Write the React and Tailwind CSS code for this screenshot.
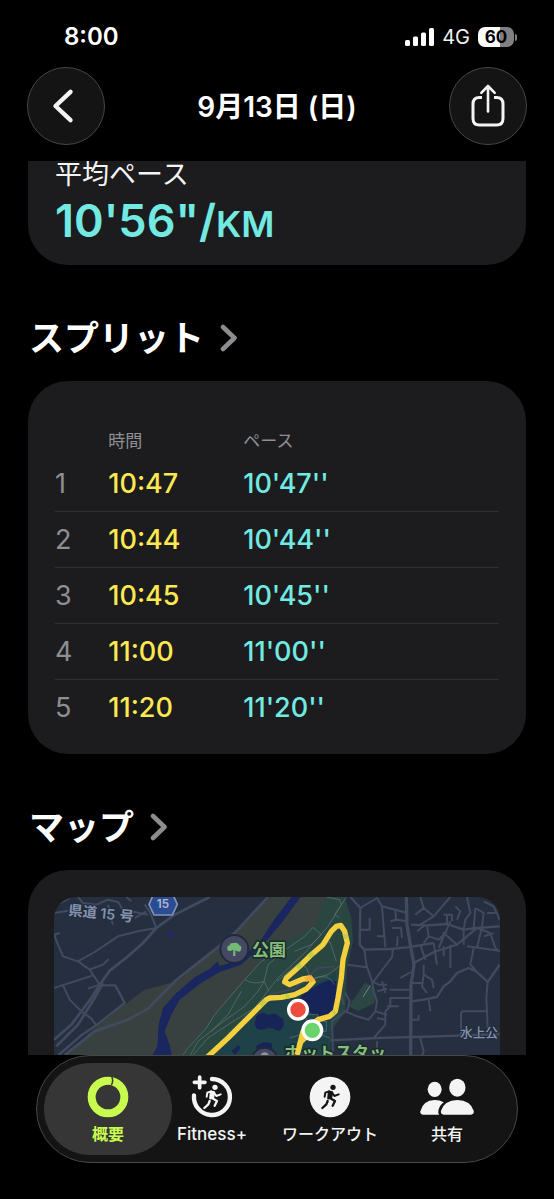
import React from "react";

const FONT = "font-['Inter','Noto_Sans_CJK_JP',sans-serif]";

const SPLITS = [
  { km: 1, time: "10:47", pace: "10'47''" },
  { km: 2, time: "10:44", pace: "10'44''" },
  { km: 3, time: "10:45", pace: "10'45''" },
  { km: 4, time: "11:00", pace: "11'00''" },
  { km: 5, time: "11:20", pace: "11'20''" },
];

function SignalIcon() {
  return (
    <svg className="h-[18px] w-[29px]" viewBox="0 0 29 18" fill="#fff" aria-hidden="true">
      <rect x="0" y="12" width="5" height="6" rx="1.5" />
      <rect x="8" y="8.5" width="5" height="9.5" rx="1.5" />
      <rect x="16" y="4.5" width="5" height="13.5" rx="1.5" />
      <rect x="24" y="0" width="5" height="18" rx="1.5" />
    </svg>
  );
}

function Battery() {
  return (
    <div className="flex items-center gap-px">
      <div className="flex h-5 w-9 items-center justify-center rounded-[7px] bg-linear-to-r from-white from-60% to-[#808080] to-60% text-[17px] leading-5 font-bold text-black">
        60
      </div>
      <div className="h-[7px] w-[2px] rounded-r-full bg-[#808080]" />
    </div>
  );
}

function StatusBar() {
  return (
    <div className="flex h-[67px] items-center justify-between pt-[7px] pr-[37px] pl-16">
      <div className="text-2xl font-semibold text-white">8:00</div>
      <div className="flex items-center gap-2">
        <SignalIcon />
        <div className="text-xl leading-5 text-[#f2f2f2]">4G</div>
        <Battery />
      </div>
    </div>
  );
}

function TopBar() {
  const round =
    "flex size-[78px] items-center justify-center rounded-full border border-[#474747] bg-[#141414]";
  return (
    <div className="flex items-center justify-between px-[27px]">
      <button type="button" aria-label="戻る" className={round}>
        <svg className="size-9" viewBox="0 0 36 36" fill="none" stroke="#f4f4f4" strokeWidth="4.4" strokeLinecap="round" strokeLinejoin="round">
          <path d="M22.5 3.8 7.5 18 22.5 32.2" />
        </svg>
      </button>
      <h1 className="pt-0.5 text-[28px] leading-8 font-semibold text-white">9月13日 (日)</h1>
      <button type="button" aria-label="共有" className={round}>
        <svg className="h-11 w-9" viewBox="0 0 36 44" fill="none" stroke="#f4f4f4" strokeWidth="3" strokeLinecap="round" strokeLinejoin="round">
          <path d="M12 13.5H9.5Q3 13.5 3 20V34.5Q3 41 9.5 41H26.5Q33 41 33 34.5V20Q33 13.5 26.5 13.5H24" strokeLinecap="butt" />
          <path d="M18 27.5V2.5M11.3 8.8 18 2 24.7 8.8" strokeWidth="2.6" />
        </svg>
      </button>
    </div>
  );
}

function SectionHeading({ children }) {
  return (
    <h2 className="mx-[29px] mt-[53px] mb-[23px] text-[35px] leading-10 font-bold text-white">
      <a href="#" className="flex items-center gap-4">
        {children}
        <svg className="h-7 w-[18px]" viewBox="0 0 18 28" fill="none" stroke="#8b8b90" strokeWidth="4.6" strokeLinecap="round" strokeLinejoin="round" aria-hidden="true">
          <path d="M3 3 14.5 14 3 25" />
        </svg>
      </a>
    </h2>
  );
}

function SplitTable() {
  return (
    <div className="mx-7 rounded-[40px] bg-[#1c1c1e] px-[27px] pt-[46px] pb-[19px]">
      <table className="w-full table-fixed border-collapse text-left">
        <colgroup>
          <col className="w-[12%]" />
          <col className="w-[30.4%]" />
          <col />
        </colgroup>
        <thead>
          <tr className="h-7 text-[17px] leading-7 text-[#8e8e93]">
            <td className="p-0" />
            <th scope="col" className="p-0 font-normal">時間</th>
            <th scope="col" className="p-0 font-normal">ペース</th>
          </tr>
        </thead>
        <tbody>
          {SPLITS.map((s) => (
            <tr key={s.km} className="h-14 border-b border-[#303032] text-[27px] leading-8 last:border-b-0">
              <th scope="row" className="p-0 pt-0.5 font-normal text-[#8e8e93]">{s.km}</th>
              <td className="p-0 pt-0.5 font-medium text-[#fde851]">{s.time}</td>
              <td className="p-0 pt-0.5 font-medium text-[#72e9e1]">{s.pace}</td>
            </tr>
          ))}
        </tbody>
      </table>
    </div>
  );
}

function RouteMap() {
  return (
    <svg
      className="block h-[200px] w-full rounded-[22px]"
      viewBox="78 97 1338 600"
      preserveAspectRatio="xMidYMin slice"
      role="img"
      aria-label="ルートマップ"
    >
      <rect x="78" y="97" width="1338" height="600" fill="#252f40" />
      {/* riverbank */}
      <path d="M725 97 L660 168 560 255 450 350 Q370 370 345 378 L290 420 190 500 105 580 V700H700L860 300 895 97Z" fill="#394140" />
      {/* park */}
      <path d="M465 571 L550 460 650 345 700 285 790 220 865 180 880 130 895 97H950L970 160 975 230 957 310 952 440 908 500V700H400Z" fill="#294740" />
      <path d="M560 571 L720 410 790 380 880 350 925 320 925 430 905 500V600H540Z" fill="#1f4148" />
      <path d="M1012 353 L1040 372 1040 415 990 440 962 425Z" fill="#2b4644" />
      {/* water */}
      <path d="M372 575 L388 545 392 480 405 430 445 385 500 338 545 312 568 290 575 303 620 292 690 240 735 170 790 97H818L765 170 712 232 640 300 575 322 515 358 455 405 430 450 410 500 425 540 432 575Z" fill="#19265f" />
      <path d="M818 395 L870 360 900 347 925 350 922 440 890 460 850 445 835 425Z" fill="#172458" />
      <path d="M685 455 q20 -18 35 -4 q30 -12 38 14 q-2 34 -35 24 q-40 18 -43 -14z M735 470 q35 -30 32 12 q-12 30 -32 8z M610 560 l20 -18 8 8 -16 20z M685 545 q20 -20 48 -8 l-5 30 -40 4z" fill="#172458" />
      <path d="M412 205 l20 -6 6 12 -12 6z" fill="#1c2c66" />

      {/* west roads */}
      <g fill="none" stroke="#414b60" strokeWidth="6" strokeLinejoin="round">
        <path strokeWidth="8" d="M720 97 L625 200 560 255 440 350 360 432 300 465 200 500 110 571" />
        <path strokeWidth="8" d="M78 525 L130 480 190 400 215 360 245 318 300 275 345 235 385 190 440 150 545 97" />
        <path strokeWidth="8" d="M85 545 L150 480 200 400 225 355" />
        <path strokeWidth="7" d="M92 571 L160 512 205 482 290 415 262 362 215 362" />
        <path d="M78 145 L120 138M78 210 L90 240 105 275 150 290 185 315 215 360M150 290 L200 262 270 215 330 200 385 190 365 140 350 120" />
        <path d="M78 370 L195 332M185 315 L225 300 242 283M180 372 L215 360M105 362 L125 405 160 440 190 462 205 482M78 210 L95 205 M150 97 L165 115 205 120 240 105 270 112 285 135 360 150M240 120 L250 165 255 180" />
        <path d="M78 125 L125 100M320 160 L355 140M295 97 L310 110" />
      </g>

      {/* park paths */}
      <g fill="none" stroke="#67757b" strokeWidth="2">
        <path d="M465 571 L480 550 535 490 560 450 650 345 700 290 745 262 780 250 830 215 855 188 880 210 850 240 800 260" />
        <path d="M650 345 Q680 362 708 350 L722 378M487 571 L510 530 580 475 650 425 690 380 708 350 720 300 750 275" />
        <path d="M495 571 L540 520 600 480 680 430 720 378 750 340 830 265 900 185 955 97M640 380 L600 450 550 500" />
        <path d="M895 97 L935 105 940 120 920 150 935 160M747 350 L830 280 880 250 905 230 925 290" />
        <path d="M820 295 Q860 330 830 350 T770 350M860 340 L900 330 940 300M850 345 Q900 320 920 360M785 520 L850 500 905 520M830 450 H870V470H895V500H850Z" />
      </g>
      <path d="M1005 397 L1027 362" stroke="#718580" strokeWidth="3" />
      <path d="M560 565 L650 470 730 388 800 372 870 310 920 305" fill="none" stroke="#3c4862" strokeWidth="5" />

      {/* east roads */}
      <g transform="translate(747 0)" fill="none" stroke="#414b60" strokeWidth="6" strokeLinejoin="round">
        <path strokeWidth="10" d="M388 97 L390 180 400 240 411 300 402 360 401 571" />
        <path strokeWidth="7" d="M160 527 L300 520 480 515 668 508" />
        <path strokeWidth="7" d="M220 97 L250 130 248 240 262 255 340 253 392 248 470 235" />
        <path d="M250 130 L300 100 315 125 320 190 325 248M315 125 L355 135 390 145M390 170 L360 165 340 170M355 135 L357 165M278 160 V195H250M300 215 H325M348 253 L345 278 320 310 290 350M360 245 L362 215M345 190 L372 190 375 220" />
        <path d="M262 255 L268 300 285 350 290 380 300 410 295 440 275 465 240 455 205 440 165 470 168 571M212 300 L268 308M285 350 L305 360 330 360M300 380 L330 372M315 350 L325 385M338 400 H400M338 375 H400M340 400 V425L325 440 V480L290 520M295 440 L330 450M370 340 L402 322M330 425 H365M300 460 L325 465" />
        <path strokeWidth="7" d="M411 295 L470 262 540 240 600 190 668 185M402 180 L450 182 510 178 560 195 600 190M404 410 L440 405 480 397 500 365 520 350 540 325 575 310 600 322 632 352 668 300" />
        <path d="M430 97 L440 130 415 150M440 130 L470 155 500 120 520 97M470 155 L430 180M450 182 L455 215 440 235M510 150 V178M500 150 H525V170M540 165 L550 140 535 125M560 195 V240M520 240 V310M485 250 L520 170M470 235 L480 300M445 180 L420 200M500 245 V275M540 240 L500 205 490 240M455 215 L485 225 510 200M430 240 L445 285M570 97 L580 145 565 165 560 195M595 130 L620 145 615 185 600 250M595 130 L590 190M620 110 L650 125 668 165M630 145 H655M640 205 L655 250 668 262M600 190 L640 205M590 250 L580 300 600 322M570 245 L668 258M620 215 L650 205" />
        <path d="M440 300 V330L465 345 470 370M404 355 H440M440 330 L435 365 450 385M455 405 L460 440M402 465 H425V450M632 352 L628 400 630 440 632 490M630 440 H560Q552 440 552 450V510M430 520 L440 560 436 571M300 530 L300 571M205 385 L218 410 210 440M190 380 L200 420" />
      </g>

      {/* recorded route */}
      <path
        d="M535 580 L600 520 715 405 725 400 760 398 800 390 835 373 855 352 845 340 825 343 785 360 770 352 775 340 820 300 850 270 885 240 910 200 925 185 938 182 950 200 958 235 945 285 940 340 930 400 922 440 905 455 870 465 825 500 815 540 805 580"
        fill="none" stroke="#f4cf3e" strokeWidth="16" strokeLinejoin="round"
      />
      <g fill="none" stroke="#c5cc46" strokeWidth="14">
        <path d="M697 423 L712 408M808 310 L820 300M842 277 L855 265M950 208 L956 222M922 440 L915 447M772 396 L785 393" />
        <path d="M832 345 L848 340 855 350" stroke="#f5b23b" />
      </g>

      {/* route shield */}
      <path d="M378 86 H433L448 119 433 151H378L363 119Z" fill="#2c4c92" stroke="#8093bd" strokeWidth="5" strokeLinejoin="round" />
      <g fontFamily="Inter, 'Noto Sans CJK JP', sans-serif">
        <text x="405" y="129" textAnchor="middle" fontSize="35" fontWeight="600" fill="#aebad4">15</text>
        <g fill="#8492ad" stroke="#222c3e" strokeWidth="6" paintOrder="stroke" fontWeight="600">
          <g transform="translate(120 151) rotate(6)" fontSize="43">
            <text>県道</text>
            <text x="96">15</text>
            <text x="154">号</text>
          </g>
          <text x="1296" y="516" fontSize="38" fontWeight="500">水上公</text>
        </g>
        <circle cx="619" cy="253" r="42" fill="#444862" stroke="#202a3a" strokeWidth="6" />
        <path d="M615 274 L616 255 Q598 265 598 252 Q596 244 605 242 Q606 233 618 235 Q630 231 634 242 Q644 246 638 258 Q632 264 622 257 L622 274Z" fill="#72ba72" />
        <circle cx="710" cy="588" r="39" fill="#444862" stroke="#202a3a" strokeWidth="6" />
        <circle cx="710" cy="576" r="13" fill="#8b91a3" />
        <g fill="#86bd7a" stroke="#182a2c" strokeWidth="9" paintOrder="stroke" strokeLinejoin="round" fontWeight="600">
          <text x="672" y="274" fontSize="51">公園</text>
          <text x="768" y="582" fontSize="51">ホットスタッ</text>
        </g>
      </g>

      <path d="M807 571 L818 532 836 515" fill="none" stroke="#f4cf3e" strokeWidth="16" />
      {/* end and start pins */}
      <g stroke="#fff" strokeWidth="10">
        <circle cx="810" cy="435" r="28" fill="#ee4d3d" />
        <circle cx="853" cy="497" r="28" fill="#6ad46a" />
      </g>
    </svg>
  );
}

/* Figure drawn in thirds of a pixel, centred on the origin. */
function Runner({ color }) {
  return (
    <g fill="none" stroke={color} strokeWidth="7" strokeLinecap="round" strokeLinejoin="round">
      <circle cx="9" cy="-29" r="8" fill={color} stroke="none" />
      <path d="M-3 -16 L6 -14 3 2 -5 4Z" fill={color} />
      <path d="M-3 -17 L-14 -13 -16 -1" strokeWidth="6" />
      <path d="M6 -13 L13 -3 26 -8" strokeWidth="6" />
      <path d="M1 4 L15 12 8 26" />
      <path d="M-7 12 L-11 22 -23 33" />
    </g>
  );
}

function SummaryIcon() {
  return (
    <svg className="size-[42px]" viewBox="-63 -63 126 126" fill="none" aria-hidden="true">
      <circle r="49" stroke="#c9fb4f" strokeWidth="24" />
      <path d="M10 -64 Q18 -49 10 -36" stroke="#3a3a3a" strokeWidth="4.5" />
    </svg>
  );
}

function FitnessIcon() {
  return (
    <svg className="size-[42px] overflow-visible" viewBox="-63 -63 126 126" fill="none" stroke="#f4f4f4" strokeWidth="13" strokeLinecap="round" aria-hidden="true">
      <path d="M0 -54 A54 54 0 1 1 -54 -5" />
      <path d="M-37 -60V-28M-53 -44H-21" strokeWidth="11" />
      <Runner color="#f4f4f4" />
    </svg>
  );
}

function WorkoutIcon() {
  return (
    <svg className="size-[42px]" viewBox="-63 -63 126 126" aria-hidden="true">
      <circle r="61" fill="#f4f4f4" />
      <Runner color="#141414" />
    </svg>
  );
}

function SharingIcon() {
  return (
    <svg className="h-[42px] w-[54px]" viewBox="451 93 162 126" fill="#f4f4f4" aria-hidden="true">
      <ellipse cx="495" cy="133" rx="21" ry="23" />
      <ellipse cx="563" cy="128" rx="24.500" ry="27" />
      <path d="M460 209 Q451 209 452 199 Q460 166 495 165 Q511 165 522 172 Q505 186 506 203 Q506 207 509 209Z" />
      <path d="M522 209 Q512 208 514 197 Q524 166 563 165 Q602 166 612 197 Q614 208 604 209Z" />
    </svg>
  );
}

const TABS = [
  { label: "概要", Icon: SummaryIcon, className: "rounded-full bg-[#363636] text-base text-[#c9fb4f] font-bold" },
  { label: "Fitness+", Icon: FitnessIcon, className: "text-[17px] text-[#f4f4f4] font-medium" },
  { label: "ワークアウト", Icon: WorkoutIcon, className: "text-base text-[#f4f4f4] font-medium" },
  { label: "共有", Icon: SharingIcon, className: "pr-6 text-base text-[#f4f4f4] font-medium" },
];

function TabBar() {
  return (
    <nav className="mx-9 mb-9 grid shrink-0 grid-cols-[128fr_80fr_156fr_102fr] rounded-full border border-[#474747] bg-[#141414] p-[7px]">
      {TABS.map(({ label, Icon, className }) => (
        <button
          key={label}
          type="button"
          className={`flex flex-col items-center gap-1.5 pt-[13px] pb-[11px] leading-5 whitespace-nowrap ${className}`}
        >
          <Icon />
          <span className="leading-5">{label}</span>
        </button>
      ))}
    </nav>
  );
}

export default function App() {
  return (
    <div className={`flex h-screen flex-col overflow-hidden bg-black ${FONT}`} lang="ja">
      <header className="shrink-0 pb-4">
        <StatusBar />
        <TopBar />
      </header>
      <main className="min-h-0 flex-1 overflow-hidden">
        <div className="mx-7 rounded-b-[40px] bg-[#1c1c1e] px-[27px] pb-5">
          <p className="text-[27px] leading-7 text-[#f4f4f4]">平均ペース</p>
          <p className="mt-2 flex h-12 items-baseline text-[45px] leading-[48px] font-semibold text-[#72e9e1]">
            <span>10'56"/</span>
            <span className="text-[36px]">KM</span>
          </p>
        </div>
        <SectionHeading>スプリット</SectionHeading>
        <SplitTable />
        <SectionHeading>マップ</SectionHeading>
        <div className="mx-7 rounded-[40px] bg-[#1c1c1e] px-[26px] py-[27px]">
          <RouteMap />
        </div>
      </main>
      <TabBar />
    </div>
  );
}
